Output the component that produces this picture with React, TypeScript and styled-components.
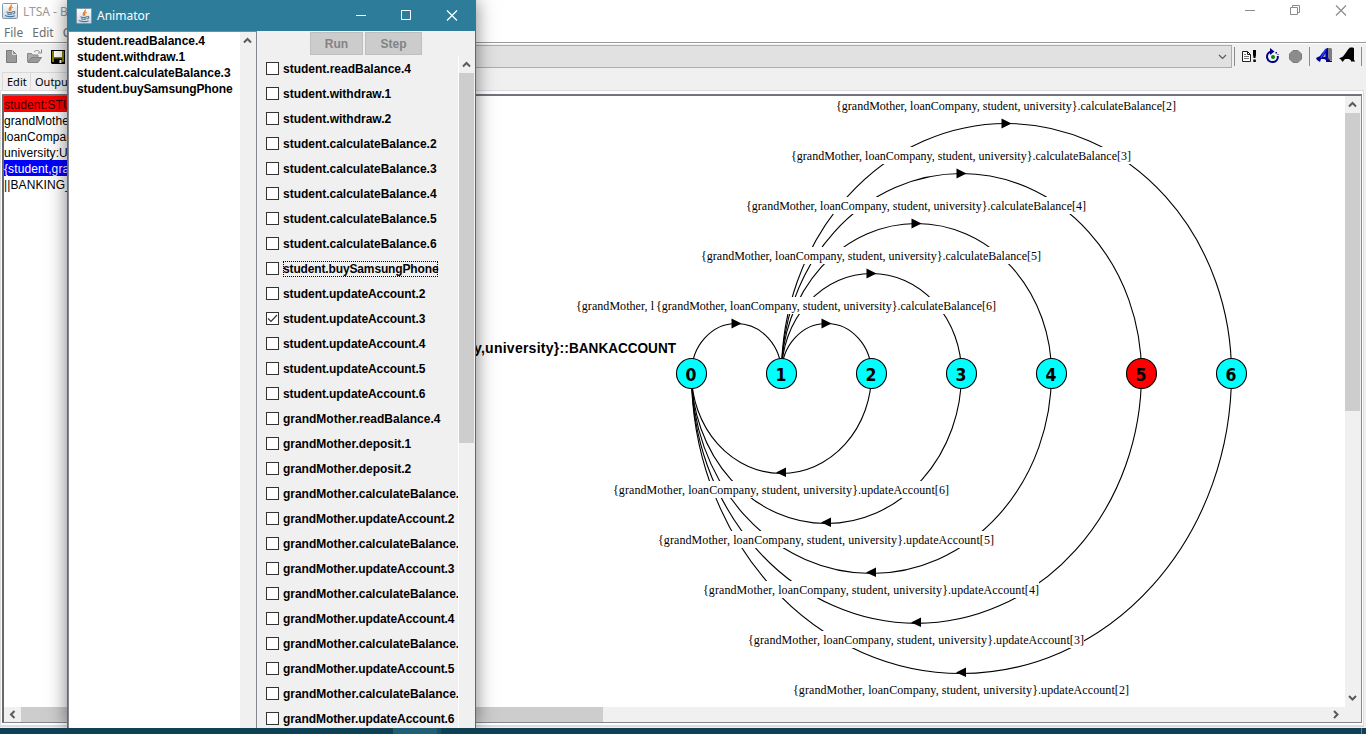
import React from "react";
import styled, { createGlobalStyle, css } from "styled-components";

const GlobalStyle = createGlobalStyle`
  html, body { margin: 0; padding: 0; overflow: hidden; background: #fff; }
  * { box-sizing: border-box; }
`;

const SANS = '"Liberation Sans", Arial, sans-serif';
const UI = '"Noto Sans", "Open Sans", sans-serif';
const SERIF = '"Liberation Serif", "Times New Roman", serif';
const DIGITS = '"DejaVu Sans Condensed", "DejaVu Sans", sans-serif';

const Desktop = styled.div`
  position: relative;
  width: 1366px;
  height: 734px;
  display: flex;
  flex-direction: column;
  overflow: hidden;
  font-family: ${SANS};
`;

const MainWindow = styled.div`
  flex: 1;
  display: flex;
  flex-direction: column;
  background: #f0f0f0;
  min-height: 0;
`;

const TitleBar = styled.div`
  height: 23px;
  display: flex;
  align-items: flex-start;
  padding: 3px 19px 0 2px;
  background: #fff;
  color: #999;
  font: 12px/18px ${UI};
`;

const TitleText = styled.span<{ $width?: number }>`
  margin-left: 5px;
  ${(p) => p.$width && css`width: ${p.$width}px; overflow: hidden;`}
  white-space: pre;
`;

const MenuBar = styled.div`
  height: 21px;
  display: flex;
  gap: 9px;
  padding: 1px 0 0 4px;
  background: #fff;
  box-shadow: inset 0 -1px 0 #fff, inset 0 -2px 0 #999;
  color: #6d6d6d;
  font: 12px/18px ${UI};
`;

const ToolBar = styled.div`
  height: 28px;
  display: flex;
  align-items: flex-start;
  padding: 1px 4px 0 4px;
`;

const ToolIcons = styled.div`
  width: 90px;
  display: flex;
  gap: 6px;
  padding-top: 3px;
`;

const Combo = styled.div`
  flex: 1;
  height: 23px;
  display: flex;
  align-items: center;
  justify-content: flex-end;
  padding-right: 4px;
  background: #e1e1e1;
  border: 1px solid #adadad;
`;

const Divider = styled.div`
  width: 1px;
  height: 19px;
  margin-top: 2px;
  background: #8c8c8c;
`;

const IconGroup = styled.div<{ $width: number }>`
  width: ${(p) => p.$width}px;
  height: 23px;
  display: flex;
`;

const TabStrip = styled.div`
  height: 18px;
  display: flex;
  padding-left: 2px;
`;

const Tab = styled.div<{ $width: number }>`
  width: ${(p) => p.$width}px;
  border: 1px solid #d9d9d9;
  border-bottom: 0;
  margin-right: -1px;
  padding-left: 4px;
  color: #000;
  font: 11px/18px ${UI};
  white-space: nowrap;
  overflow: hidden;
`;

const TabPanel = styled.div`
  flex: 1;
  display: flex;
  margin: 0 2px 1px 0;
  padding: 3px 1px 2px 1px;
  background: #fff;
  border: 1px solid #dcdcdc;
  border-bottom-width: 2px;
  min-height: 0;
`;

const Sunken = styled.div`
  flex: 1;
  display: flex;
  flex-direction: column;
  border: 1px solid #828790;
  border-top: 2px solid #73737b;
  border-left: 2px solid #696969;
`;

const ViewRow = styled.div`
  flex: 1;
  display: flex;
  min-height: 0;
`;

const ProcessList = styled.div`
  width: 472px;
  background: #fff;
`;

const Process = styled.div<{ $tone?: "error" | "selected" }>`
  height: 16px;
  padding-top: 1px;
  font: 12px/16px ${SANS};
  letter-spacing: 0.1px;
  white-space: nowrap;
  color: #000;
  ${(p) => p.$tone === "error" && css`background: #f00; color: #300;`}
  ${(p) => p.$tone === "selected" && css`background: #00f; color: #fff;`}
`;

const Diagram = styled.svg`
  display: block;
  flex: none;
  background: #fff;
`;

const VScroll = styled.div<{ $width: number }>`
  width: ${(p) => p.$width}px;
  display: flex;
  flex-direction: column;
  background: #f0f0f0;
`;

const ScrollButton = styled.div<{ $w: number; $h: number }>`
  width: ${(p) => p.$w}px;
  height: ${(p) => p.$h}px;
  display: flex;
  align-items: center;
  justify-content: center;
`;

const Thumb = styled.div<{ $w: number; $h: number }>`
  width: ${(p) => p.$w}px;
  height: ${(p) => p.$h}px;
  background: #cdcdcd;
`;

const Spacer = styled.div`
  flex: 1;
`;

const HScroll = styled.div`
  height: 15px;
  display: flex;
  background: #f0f0f0;
  padding-right: 17px;
`;

const TaskBar = styled.div`
  height: 6px;
  display: flex;
  padding: 0 4px 0 393px;
  justify-content: space-between;
  background: #0f4156;
`;

const TaskButton = styled.div`
  width: 48px;
  background: linear-gradient(90deg, #215f75 0 44px, #194f65 44px);
`;

const ShowDesktop = styled.div`
  width: 1px;
  background: #5d8294;
`;

/* Floating animator window */
const Animator = styled.div`
  position: absolute;
  left: 67px;
  top: 0;
  width: 409px;
  height: 728px;
  display: flex;
  flex-direction: column;
  background: #f0f0f0;
  border: 1px solid #2d7d9a;
  border-width: 0 1px;
  box-shadow: 0 0 18px rgba(0, 0, 0, 0.5);
  clip-path: inset(0 -40px 0 -40px);
`;

const AnimatorTitle = styled.div`
  height: 31px;
  display: flex;
  align-items: center;
  padding: 0 17px 0 8px;
  background: #2d7d9a;
  color: #fff;
  font: 12px/18px ${UI};
`;

const AnimatorBody = styled.div`
  flex: 1;
  display: flex;
  min-height: 0;
`;

const TracePane = styled.div`
  width: 189px;
  display: flex;
  border: 1px solid #828790;
  border-bottom: 0;
  background: #fff;
`;

const Trace = styled.div`
  flex: 1;
  padding: 1px 0 0 8px;
`;

const actionFont = css<{ $spacing: number }>`
  font: bold 12px/16px ${SANS};
  letter-spacing: ${(p) => p.$spacing}px;
  color: #000;
  white-space: nowrap;
`;

const TraceItem = styled.div<{ $spacing: number }>`
  ${actionFont}
`;

const ActionPane = styled.div`
  flex: 1;
  display: flex;
  flex-direction: column;
  min-width: 0;
`;

const ButtonRow = styled.div`
  height: 25px;
  display: flex;
  gap: 2px;
  padding: 1px 0 0 53px;
`;

const PushButton = styled.div<{ $width: number }>`
  width: ${(p) => p.$width}px;
  height: 23px;
  background: #ccc;
  border: 1px solid #bfbfbf;
  color: #838383;
  font: bold 12px/23px ${SANS};
  text-align: center;
`;

const ActionScroll = styled.div`
  flex: 1;
  display: flex;
  min-height: 0;
`;

const ActionList = styled.div`
  width: 202px;
  overflow: hidden;
  border-right: 1px solid #fff;
  padding-left: 9px;
`;

const ActionRow = styled.div`
  height: 25px;
  display: flex;
  align-items: center;
  gap: 4px;
`;

const Box = styled.span`
  flex: none;
  width: 13px;
  height: 13px;
  display: flex;
  background: #fff;
  border: 1px solid #333;
`;

const ActionLabel = styled.span<{ $spacing: number; $focused?: boolean }>`
  ${actionFont}
  ${(p) => p.$focused && css`outline: 1px dotted #000; outline-offset: -1px;`}
`;

const JavaIcon = () => (
  <svg width="16" height="16" viewBox="0 0 16 16" style={{ flex: "none" }}>
    <defs>
      <linearGradient id="jv" x1="0" y1="0" x2="0" y2="1">
        <stop offset="0" stopColor="#ffffff" />
        <stop offset="1" stopColor="#c9d3dc" />
      </linearGradient>
    </defs>
    <rect x=".5" y=".5" width="15" height="15" rx="1" fill="url(#jv)" stroke="#8197ab" />
    <path d="M9.5 1.5C9.9 4 5.4 4.7 7.8 8M10.8 4.2C8 5.2 8.3 6 9 7.8" fill="none" stroke="#e8822c" strokeWidth="1.2" />
    <path d="M4.5 8.8c1.5.9 5 .8 6.5 0M5.2 10.8c1.500.6 3.500.6 5 0M3 12.400c2 1.700 8 1.600 9.600.2M11.200 8.600c2.400-.4 2 2-.4 2.300" fill="none" stroke="#4c7397" strokeWidth="1.1" />
  </svg>
);

type Dir = "up" | "down" | "left" | "right";
const arrows: Record<Dir, string> = {
  up: "M1 6.5 4.5 3 8 6.5",
  down: "M1 3 4.5 6.5 8 3",
  left: "M6.5 1 3 4.5 6.5 8",
  right: "M3 1 6.5 4.5 3 8",
};
const Arrow = ({ dir, thin }: { dir: Dir; thin?: boolean }) => (
  <svg width="9" height="9" viewBox="0 0 9 9">
    <path d={arrows[dir]} fill="none" stroke="#5a5a5a" strokeWidth={thin ? 1.2 : 2} />
  </svg>
);

const Controls = styled.svg`
  flex: none;
  margin-left: auto;
`;

const WindowControls = ({ color, restore }: { color: string; restore?: boolean }) => (
  <Controls width="104" height="16" viewBox="0 0 104 16" fill="none" stroke={color} strokeWidth="1">
    <path d="M2 7.500h10" />
    {restore ? (
      <path d="M47.500 4.500h7v7h-7zM49.500 4.500v-2h7v7h-2" />
    ) : (
      <path d="M47.500 2.500h9v9h-9z" />
    )}
    <path d="M93 2.500l10 10M103 2.500l-10 10" strokeWidth="1.2" />
  </Controls>
);

const FileIcons = () => (
  <svg width="62" height="18" viewBox="4 47 62 18">
    <path d="M6.500 49.500h6l4 4v8h-10z" fill="#999" stroke="#7b7b7b" />
    <path d="M12.500 49.500v4h4" fill="none" stroke="#ddd" />
    <path d="M27.500 61V52.500h4l1 1.500h5.500v3" fill="#aaa" stroke="#888" />
    <path d="M28 61.500l3.500-5h10l-3.500 5z" fill="#999" stroke="#808080" />
    <path d="M34 51c2-2 4-2 6 0M41.500 48.500v3.500h-3.500" fill="none" stroke="#888" />
    <path d="M51 49h14v14H52l-1-1z" fill="#000" />
    <path d="M52 50h2v11h-2zM62 50h2v11h-2zM54 56h8v1.500h-8z" fill="#808000" />
    <path d="M54 50h8v6h-8z" fill="#fff" />
    <path d="M59.500 59h2v3h-2z" fill="#fff" />
  </svg>
);

const RunIcons = () => (
  <svg width="74" height="23" viewBox="1235 45 74 23">
    <path d="M1242.500 51.500h5l3 3v7h-8zM1247.500 51.500v3h3" fill="#fff" stroke="#222" />
    <path d="M1244 54.500h2M1244 56.500h5M1244 58.500h5" fill="none" stroke="#777" />
    <path d="M1253 50h3v5l-.6 3h-1.800l-.6-3zM1253.300 59.500h2.500v2.500h-2.500z" fill="#000" />
    <path d="M1270.500 51.600a5.400 5.400 0 1 0 7.300 4.400" fill="none" stroke="#000080" strokeWidth="2" />
    <path d="M1270 48l4.500 3.500-4.500 3.500z" fill="#000080" />
    <path d="M1275.500 52h1.500v1.500h-1.500zM1277.500 54h1v1h-1z" fill="#000080" />
    <circle cx="1273" cy="57" r="2" fill="#008a00" />
    <path d="M1293 50.500h5l3.500 3.500v5l-3.500 3.500h-5l-3.500-3.500v-5z" fill="#8c8c8c" stroke="#7b7b7b" />
  </svg>
);

const AlphaIcons = () => (
  <svg width="51" height="23" viewBox="1310 45 51 23">
    <path d="M1316 58l4-2 2-3 3-3 2-2h3v13h1v1h-5v-2l-2-1h-3l-1 3-3-2z" fill="#00009c" />
    <path d="M1328 48h3l1 1v12l-3-1-2-2z" fill="#7d7d7d" />
    <path d="M1327.500 49v9l3 3.500h1.500" fill="none" stroke="#00009c" />
    <path d="M1326 49l-3 5-2 4" fill="none" stroke="#1c3cff" strokeWidth="1.6" />
    <path d="M1325.500 53v4h-2.500z" fill="#a9a9a9" />
    <path d="M1339 58.500l4-2 3-4 2-3 2-2h3l1 1v12h1v1h-4v-1l-2-1.500h-4l-2 2.500h-1l-1-2z" fill="#000" />
  </svg>
);

const Check = () => (
  <svg width="11" height="11" viewBox="0 0 11 11">
    <path d="M1 5.500 4 8.500 10 2" fill="none" stroke="#333" strokeWidth="1.200" />
  </svg>
);

const trace = ["student.readBalance.4", "student.withdraw.1", "student.calculateBalance.3", "student.buySamsungPhone"];

const actions = [
  "student.readBalance.4", "student.withdraw.1", "student.withdraw.2",
  "student.calculateBalance.2", "student.calculateBalance.3", "student.calculateBalance.4",
  "student.calculateBalance.5", "student.calculateBalance.6", "student.buySamsungPhone",
  "student.updateAccount.2", "student.updateAccount.3", "student.updateAccount.4",
  "student.updateAccount.5", "student.updateAccount.6", "grandMother.readBalance.4",
  "grandMother.deposit.1", "grandMother.deposit.2", "grandMother.calculateBalance.2",
  "grandMother.updateAccount.2", "grandMother.calculateBalance.3", "grandMother.updateAccount.3",
  "grandMother.calculateBalance.4", "grandMother.updateAccount.4", "grandMother.calculateBalance.5",
  "grandMother.updateAccount.5", "grandMother.calculateBalance.6", "grandMother.updateAccount.6",
];

/* Whole-pixel advances make some words slightly narrower than others */
const spacingOf = (action: string) => {
  if (action.includes("Samsung")) return -0.14;
  if (action.includes("updateAccount")) return -0.07;
  if (action.includes("calculate") || action.includes("deposit")) return -0.02;
  return 0;
};

const NODE_Y = 373.5;
const nodeX = (n: number) => 691.5 + 90 * n;
const GROUP = "{grandMother, loanCompany, student, university}";

const Arc = ({ from, to }: { from: number; to: number }) => {
  const x1 = nodeX(from);
  const x2 = nodeX(to);
  const rx = Math.abs(x2 - x1) / 2;
  const ry = (rx / 45) * 50;
  const mid = (x1 + x2) / 2;
  const forward = to > from;
  const top = forward ? NODE_Y - ry : NODE_Y + ry;
  return (
    <>
      <path d={`M${x1} ${NODE_Y}A${rx} ${ry} 0 0 1 ${x2} ${NODE_Y}`} fill="none" stroke="#000" strokeWidth="1.1" />
      <path
        d={forward ? `M${mid - 5} ${top - 5}v10l10-5z` : `M${mid + 4.5} ${top - 6}v9.5l-10-4.5z`}
        fill="#000"
      />
    </>
  );
};

const ArcLabel = ({ x, y, width, text }: { x: number; y: number; width: number; text: string }) => (
  <>
    <rect x={x} y={y - 13} width={width} height={17} fill="#fff" />
    <text x={x} y={y} textLength={width} fontFamily={SERIF} fontSize="12" fill="#000">
      {text}
    </text>
  </>
);

const StateGraph = () => (
  <Diagram width="869" height="611" viewBox="476 96 869 611">
    <Arc from={0} to={1} />
    {[2, 3, 4, 5, 6].map((n) => <Arc key={`u${n}`} from={1} to={n} />)}
    {[2, 3, 4, 5, 6].map((n) => <Arc key={`d${n}`} from={n} to={0} />)}
    <text x="576" y="310" textLength="78" fontFamily={SERIF} fontSize="12">{"{grandMother, l"}</text>
    {[2, 3, 4, 5, 6].map((n) => (
      <ArcLabel key={`c${n}`} x={836 - 45 * (n - 2)} y={110 + 50 * (n - 2)} width={340} text={`${GROUP}.calculateBalance[${n}]`} />
    ))}
    {[2, 3, 4, 5, 6].map((n) => (
      <ArcLabel key={`a${n}`} x={793 - 45 * (n - 2)} y={694 - 50 * (n - 2)} width={336} text={`${GROUP}.updateAccount[${n}]`} />
    ))}
    <text x="474" y="353" textLength="95" fontFamily={SANS} fontWeight="bold" fontSize="14">
      {"y,university}::"}
    </text>
    <text x="569" y="353" textLength="107" lengthAdjust="spacingAndGlyphs" fontFamily={SANS} fontWeight="bold" fontSize="14">
      BANKACCOUNT
    </text>
    {[0, 1, 2, 3, 4, 5, 6].map((n) => (
      <g key={n}>
        <circle cx={nodeX(n)} cy={NODE_Y} r="15" fill={n === 5 ? "#f00" : "#0ff"} stroke="#000" strokeWidth="1.1" />
        <text x={nodeX(n) - 0.5} y="380.5" textAnchor="middle" fontFamily={DIGITS} fontWeight="bold" fontSize="17.5" fontStretch="condensed">
          {n}
        </text>
      </g>
    ))}
  </Diagram>
);

export default function App() {
  return (
    <Desktop>
      <GlobalStyle />
      <MainWindow>
        <TitleBar>
          <JavaIcon />
          <TitleText $width={44}>LTSA - BA</TitleText>
          <WindowControls color="#8c8c8c" restore />
        </TitleBar>
        <MenuBar>
          <span>File</span>
          <span>Edit</span>
          <span>C</span>
        </MenuBar>
        <ToolBar>
          <ToolIcons><FileIcons /></ToolIcons>
          <Combo><Arrow dir="down" thin /></Combo>
          <IconGroup $width={2} />
          <Divider />
          <IconGroup $width={74}><RunIcons /></IconGroup>
          <Divider />
          <IconGroup $width={51}><AlphaIcons /></IconGroup>
          <Divider />
        </ToolBar>
        <TabStrip>
          <Tab $width={29}>Edit</Tab>
          <Tab $width={48}>Output</Tab>
        </TabStrip>
        <TabPanel>
          <Sunken>
            <ViewRow>
              <ProcessList>
                <Process $tone="error">student:STUDENT</Process>
                <Process>grandMother</Process>
                <Process>loanCompany</Process>
                <Process>university:UNI</Process>
                <Process $tone="selected">{"{student,grand"}</Process>
                <Process>||BANKING_</Process>
              </ProcessList>
              <StateGraph />
              <VScroll $width={16}>
                <ScrollButton $w={15} $h={17}><Arrow dir="up" /></ScrollButton>
                <Thumb $w={15} $h={298} />
                <Spacer />
                <ScrollButton $w={15} $h={20}><Arrow dir="down" /></ScrollButton>
              </VScroll>
            </ViewRow>
            <HScroll>
              <ScrollButton $w={17} $h={15}><Arrow dir="left" /></ScrollButton>
              <Thumb $w={582} $h={15} />
              <Spacer />
              <ScrollButton $w={17} $h={15}><Arrow dir="right" /></ScrollButton>
            </HScroll>
          </Sunken>
        </TabPanel>
      </MainWindow>
      <TaskBar>
        <TaskButton />
        <ShowDesktop />
      </TaskBar>

      <Animator>
        <AnimatorTitle>
          <JavaIcon />
          <TitleText>Animator</TitleText>
          <WindowControls color="#fff" />
        </AnimatorTitle>
        <AnimatorBody>
          <TracePane>
            <Trace>
              {trace.map((t) => <TraceItem key={t} $spacing={spacingOf(t)}>{t}</TraceItem>)}
            </Trace>
            <VScroll $width={16}>
              <ScrollButton $w={15} $h={17}><Arrow dir="up" /></ScrollButton>
            </VScroll>
          </TracePane>
          <ActionPane>
            <ButtonRow>
              <PushButton $width={53}>Run</PushButton>
              <PushButton $width={57}>Step</PushButton>
            </ButtonRow>
            <ActionScroll>
              <ActionList>
                {actions.map((a, i) => (
                  <ActionRow key={a}>
                    <Box>{i === 10 && <Check />}</Box>
                    <ActionLabel $spacing={spacingOf(a)} $focused={i === 8}>{a}</ActionLabel>
                  </ActionRow>
                ))}
              </ActionList>
              <VScroll $width={16}>
                <ScrollButton $w={15} $h={17}><Arrow dir="up" /></ScrollButton>
                <Thumb $w={15} $h={370} />
              </VScroll>
            </ActionScroll>
          </ActionPane>
        </AnimatorBody>
      </Animator>
    </Desktop>
  );
}
